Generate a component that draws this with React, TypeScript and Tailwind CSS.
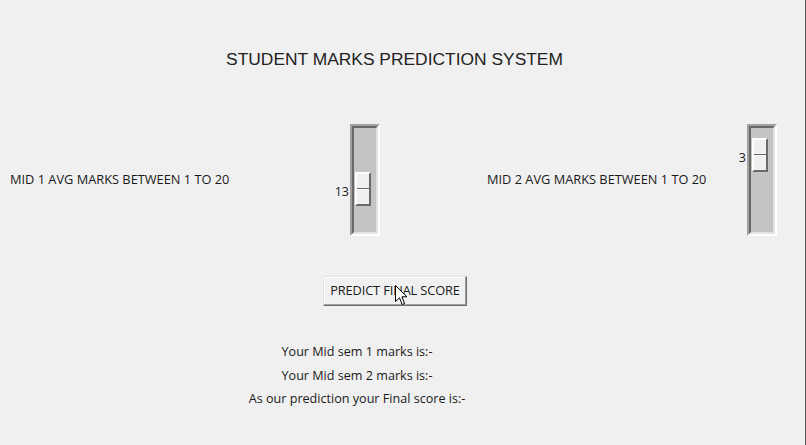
import React from 'react';

const uiFont = { fontFamily: '"Open Sans", "Noto Sans", sans-serif' };

// tk-style vertical scale, range 1..20
function Scale({ value }: { value: number }) {
  const knobTop = 7 + (value - 1) * 3.4;
  return (
    <div className="flex">
      <div className="relative w-[14px] h-[112px]">
        <span
          className="absolute right-[1px] text-[12.5px] leading-[16px] text-[#1a1a1a]"
          style={{ ...uiFont, top: knobTop + 12 }}>
          {value}
        </span>
      </div>
      <div className="w-[30px] h-[112px] border-2 border-t-[#a0a0a0] border-l-[#a0a0a0] border-b-white border-r-white">
        <div className="relative w-full h-full border-2 border-t-[#696969] border-l-[#696969] border-b-[#e3e3e3] border-r-[#e3e3e3] bg-[#c4c4c4]">
          <div
            className="absolute left-[1px] w-[16px] h-[34px] flex flex-col border-2 border-t-white border-l-white border-b-[#696969] border-r-[#696969] bg-[#f0f0f0]"
            style={{ top: knobTop - 4 }}>
            <div className="flex-1 border-b border-[#696969]" />
            <div className="flex-1 border-t border-white" />
          </div>
        </div>
      </div>
    </div>
  );
}

export default function App() {
  return (
    <div className="relative w-[806px] h-[445px] bg-[#f0f0f0] border-r border-[#5a5a5a] overflow-hidden text-[#1a1a1a]">
      {/* Title */}
      <div className="pt-[48px] flex justify-center pr-[16px]">
        <h1 className="text-[17.4px] leading-[22px] text-[#222]" style={{ fontFamily: '"Liberation Sans", Arial, sans-serif' }}>
          STUDENT MARKS PREDICTION SYSTEM
        </h1>
      </div>

      {/* Sliders row */}
      <div className="mt-[54px] flex h-[112px] items-center" style={uiFont}>
        <div className="w-[336px] pl-[10px] text-[12.8px] tracking-[0em]">MID 1 AVG MARKS BETWEEN 1 TO 20</div>
        <Scale value={13} />
        <div className="w-[353px] pl-[107px] text-[12.8px] tracking-[0em]">MID 2 AVG MARKS BETWEEN 1 TO 20</div>
        <Scale value={3} />
      </div>

      {/* Button */}
      <div className="mt-[40px] pl-[323px] flex">
        <button
          className="w-[144px] h-[30px] border border-t-[#e3e3e3] border-l-[#e3e3e3] border-b-[#6d6d6d] border-r-[#6d6d6d] bg-[#f0f0f0] text-[12.8px] tracking-[-0.01em] text-[#1a1a1a] shadow-[inset_-1px_-1px_0_#a0a0a0,inset_1px_1px_0_#ffffff]"
          style={uiFont}>
          PREDICT FINAL SCORE
        </button>
      </div>

      {/* Results */}
      <div className="mt-[34px] w-[714px] flex flex-col items-center text-[12.6px] leading-[23.5px]" style={uiFont}>
        <p>Your Mid sem 1 marks is:-</p>
        <p>Your Mid sem 2 marks is:-</p>
        <p>As our prediction your Final score is:-</p>
      </div>

      {/* mouse pointer */}
      <svg className="absolute left-[395px] top-[285px]" width="13" height="21" viewBox="0 0 13 21">
        <path d="M0.5 0.5 L0.5 16.5 L4.5 12.8 L7.2 19.5 L9.6 18.5 L6.9 11.8 L12 11.8 Z" fill="#fff" stroke="#000" strokeWidth="1" strokeLinejoin="round" />
      </svg>
    </div>
  );
}
